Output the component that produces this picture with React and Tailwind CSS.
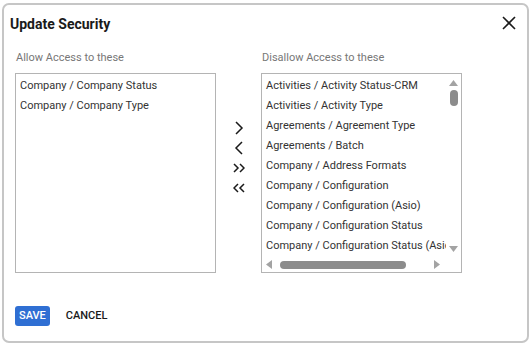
import React from "react"

const allowed = ["Company / Company Status", "Company / Company Type"]

const disallowed = [
  "Activities / Activity Status-CRM",
  "Activities / Activity Type",
  "Agreements / Agreement Type",
  "Agreements / Batch",
  "Company / Address Formats",
  "Company / Configuration",
  "Company / Configuration (Asio)",
  "Company / Configuration Status",
  "Company / Configuration Status (Asio)",
  "Company / Configuration Type",
]

function Chevron({ dir = "right", double = false }) {
  if (double) {
    const pts = dir === "right"
      ? ["1,2 5,6 1,10", "7,2 11,6 7,10"]
      : ["5,2 1,6 5,10", "11,2 7,6 11,10"]
    return (
      <svg width="12" height="12" viewBox="0 0 12 12" fill="none" stroke="#1a1a1a" strokeWidth="1.5">
        {pts.map((p) => <polyline key={p} points={p} />)}
      </svg>
    )
  }
  return (
    <svg width="10" height="14" viewBox="0 0 10 14" fill="none" stroke="#1a1a1a" strokeWidth="1.5">
      <polyline points={dir === "right" ? "2,1 8,7 2,13" : "8,1 2,7 8,13"} />
    </svg>
  )
}

function ListBox({ items, scroll }) {
  return (
    <div className="relative w-[201px] h-[200px] border border-[#b4b4b4] bg-white overflow-hidden">
      <div className={"flex flex-col pt-[2px] overflow-hidden whitespace-nowrap " + (scroll ? "w-[184px]" : "")}>
        {items.map((it) => (
          <div key={it} className="h-[20px] leading-[20px] pl-[4px] text-[11px] text-[#333]">
            {it}
          </div>
        ))}
      </div>
      {scroll && (
        <>
          {/* vertical scrollbar */}
          <div className="absolute top-0 right-0 w-[15px] h-[184px] bg-white flex flex-col items-center">
            <svg width="9" height="6" viewBox="0 0 9 6" className="mt-[6px]">
              <polygon points="0,6 4.5,0 9,6" fill="#a3a3a3" />
            </svg>
            <div className="w-[8px] h-[16px] rounded-full bg-[#8c8c8c] mt-[4px]" />
            <div className="flex-1" />
            <svg width="9" height="6" viewBox="0 0 9 6" className="mb-[6px]">
              <polygon points="0,0 4.5,6 9,0" fill="#a3a3a3" />
            </svg>
          </div>
          {/* horizontal scrollbar */}
          <div className="absolute bottom-0 left-0 right-0 h-[15px] bg-white flex items-center pl-[4px]">
            <svg width="6" height="9" viewBox="0 0 6 9">
              <polygon points="6,0 0,4.5 6,9" fill="#a3a3a3" />
            </svg>
            <div className="w-[126px] h-[8px] rounded-full bg-[#8c8c8c] ml-[8px]" />
            <svg width="6" height="9" viewBox="0 0 6 9" className="ml-[28px]">
              <polygon points="0,0 6,4.5 0,9" fill="#a3a3a3" />
            </svg>
          </div>
        </>
      )}
    </div>
  )
}

export default function App() {
  return (
    <div className="w-[531px] h-[345px] bg-white pt-[3px] px-[2px] font-['Roboto',sans-serif]">
      <div className="relative h-[340px] border-2 border-[#c6c6c6] rounded-[7px] bg-white">
        <div className="flex items-center justify-between h-[36px] pl-[6px] pr-[10px]">
          <h1 className="text-[14px] font-bold text-[#1a1a1a] mt-[2px]">Update Security</h1>
          <button className="w-[16px] h-[16px] flex items-center justify-center">
            <svg width="14" height="14" viewBox="0 0 14 14" stroke="#1a1a1a" strokeWidth="1.6">
              <line x1="1" y1="1" x2="13" y2="13" />
              <line x1="13" y1="1" x2="1" y2="13" />
            </svg>
          </button>
        </div>

        <div className="flex pl-[11px] mt-[10px]">
          <div className="flex flex-col">
            <div className="text-[11px] text-[#777] pl-[1px] h-[14px] leading-[14px]">Allow Access to these</div>
            <div className="mt-[8px]">
              <ListBox items={allowed} />
            </div>
          </div>

          <div className="w-[45px] flex flex-col items-center pt-[70px] gap-[6px]">
            <div className="h-[14px] flex items-center"><Chevron dir="right" /></div>
            <div className="h-[14px] flex items-center"><Chevron dir="left" /></div>
            <div className="h-[14px] flex items-center"><Chevron dir="right" double /></div>
            <div className="h-[14px] flex items-center"><Chevron dir="left" double /></div>
          </div>

          <div className="flex flex-col">
            <div className="text-[11px] text-[#777] pl-[1px] h-[14px] leading-[14px]">Disallow Access to these</div>
            <div className="mt-[8px]">
              <ListBox items={disallowed} scroll />
            </div>
          </div>
        </div>

        <div className="flex items-center gap-[16px] pl-[11px] mt-[33px]">
          <button className="h-[20px] px-[4px] rounded-[3px] bg-[#2f6fd3] text-white text-[11px] font-medium leading-[20px]">
            SAVE
          </button>
          <button className="text-[11px] font-medium text-[#1a1a1a]">CANCEL</button>
        </div>
      </div>
    </div>
  )
}
